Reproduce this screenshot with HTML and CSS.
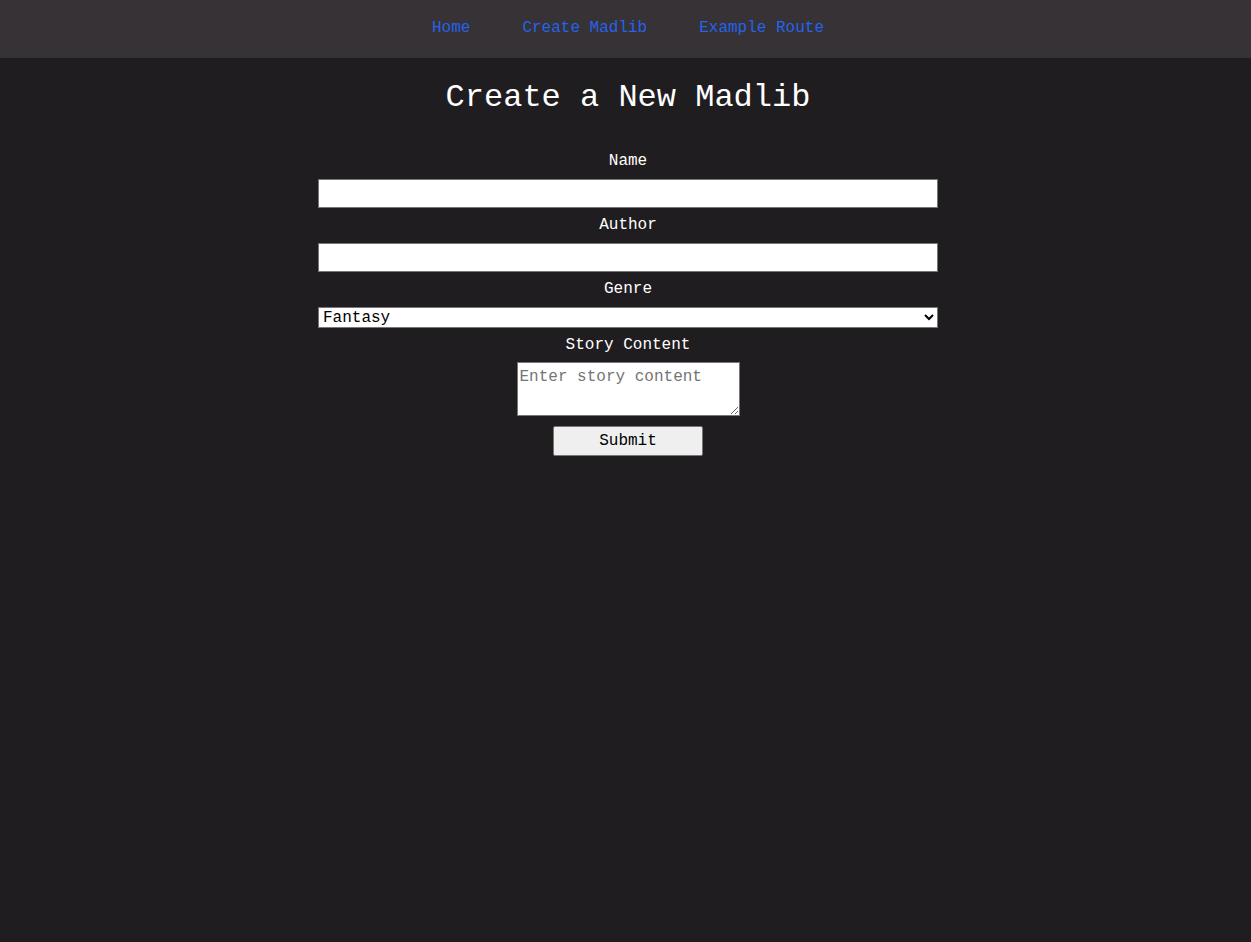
FILE: index.html
```html
<!DOCTYPE html>
<html lang="en">
<head>
<meta charset="utf-8">
<title>Create a New Madlib</title>
<link rel="stylesheet" href="styles.css">
</head>
<body>
<div class="app">
  <nav class="topnav">
    <a href="#" class="navlink">Home</a>
    <a href="#" class="navlink">Create Madlib</a>
    <a href="#" class="navlink">Example Route</a>
  </nav>
  <main class="page">
    <h1 class="title">Create a New Madlib</h1>
    <form class="form">
      <label class="label" for="name">Name</label>
      <input class="field" id="name" type="text">
      <label class="label" for="author">Author</label>
      <input class="field" id="author" type="text">
      <label class="label" for="genre">Genre</label>
      <select class="select" id="genre">
        <option>Fantasy</option>
        <option>Sci-Fi</option>
        <option>Mystery</option>
      </select>
      <label class="label" for="content">Story Content</label>
      <textarea class="area" id="content" placeholder="Enter story content"></textarea>
      <button class="submit" type="button">Submit</button>
    </form>
  </main>
</div>
</body>
</html>
```
FILE: styles.css
```css
html, body {
  margin: 0;
  padding: 0;
  background: #1f1d20;
  height: 100%;
}
body {
  font-family: "Liberation Mono", "Courier New", monospace;
  color: #ffffff;
}
.app {
  min-height: 100%;
  padding-left: 5px;
  box-sizing: border-box;
}
.topnav {
  height: 58px;
  background: #373236;
  display: flex;
  justify-content: center;
  align-items: center;
  gap: 52px;
  margin-left: -5px;
  padding-left: 5px;
}
.navlink {
  color: #2563eb;
  text-decoration: none;
  font-size: 16px;
  line-height: 18px;
  padding-bottom: 2px;
}
.page {
  display: flex;
  flex-direction: column;
  align-items: center;
}
.title {
  margin: 22px 0 35px;
  font-size: 32px;
  line-height: 36px;
  font-weight: normal;
}
.form {
  display: flex;
  flex-direction: column;
  align-items: center;
}
.label {
  font-size: 16px;
  line-height: 18px;
  padding-top: 1px;
  margin-bottom: 9px;
}
.field {
  width: 620px;
  height: 29px;
  box-sizing: border-box;
  border: 1px solid #767676;
  background: #ffffff;
  margin: 0 0 7px;
  font-family: inherit;
  font-size: 16px;
}
.select {
  width: 620px;
  height: 21px;
  box-sizing: border-box;
  border: 1px solid #767676;
  background: #ffffff;
  color: #000000;
  margin: 0 0 7px;
  font-family: inherit;
  font-size: 16px;
  padding: 0;
}
.area {
  width: 223px;
  height: 54px;
  box-sizing: border-box;
  border: 1px solid #767676;
  background: #ffffff;
  margin: -1px 0 10px;
  font-family: inherit;
  font-size: 16px;
  padding: 5px 2px 2px;
}
.area::placeholder {
  color: #757575;
}
.submit {
  width: 150px;
  height: 30px;
  box-sizing: border-box;
  background: #efefef;
  border: 1px solid #767676;
  border-radius: 2px;
  font-family: inherit;
  font-size: 16px;
  color: #000000;
}
```
